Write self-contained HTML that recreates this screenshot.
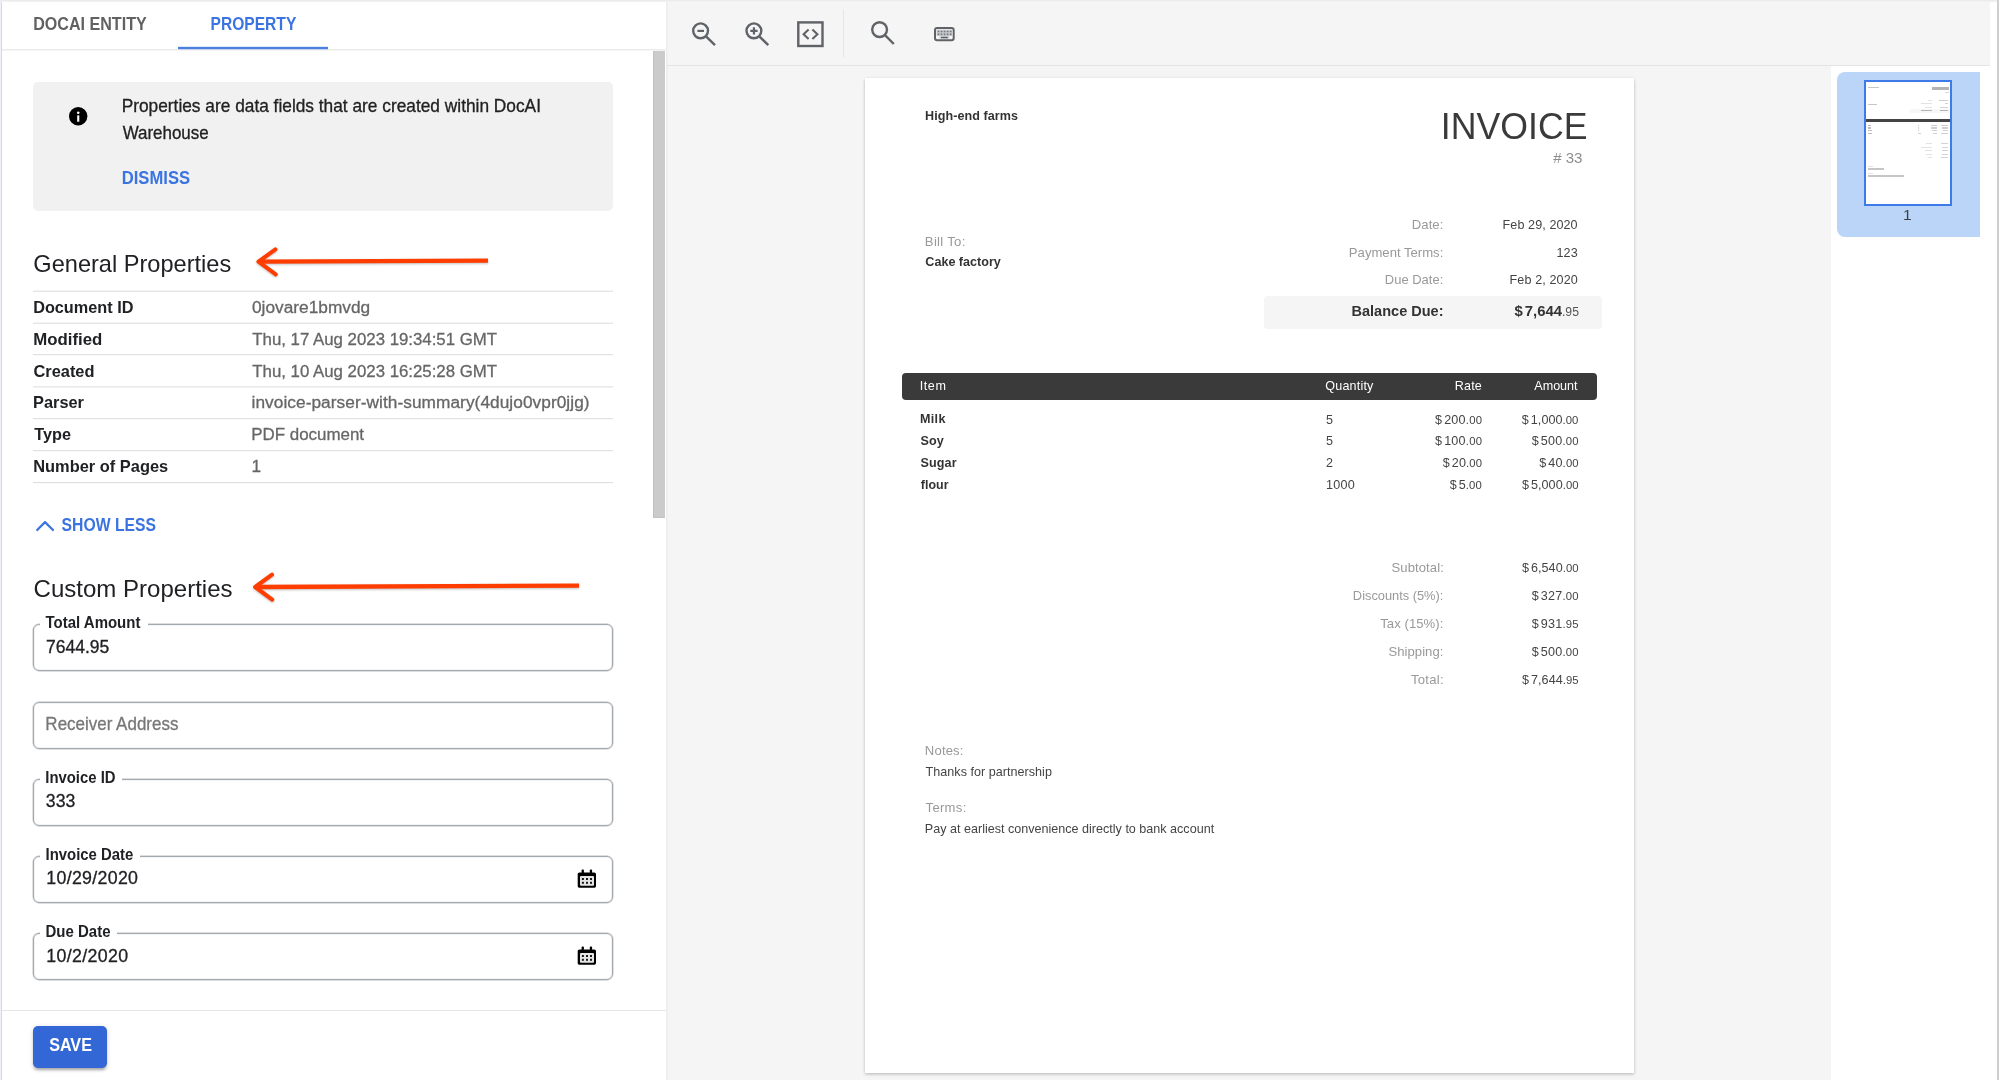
<!DOCTYPE html>
<html lang="en"><head><meta charset="utf-8"><title>Document AI Warehouse</title>
<style>
html,body{margin:0;padding:0}
body{width:1999px;height:1080px;position:relative;overflow:hidden;background:#fff;font-family:"Liberation Sans",sans-serif}
.a{position:absolute}
.t{position:absolute;white-space:nowrap;line-height:1;transform-origin:0 0}
.hl{position:absolute;left:33px;width:580px;height:1px}
.fld{position:absolute;left:33px;width:580px;height:47px;box-sizing:border-box;border:1px solid #a4a9ae;border-radius:6px;box-shadow:0 0 0 .45px rgba(164,169,174,.75),inset 0 0 0 .3px rgba(164,169,174,.5)}
.notch{position:absolute;top:-3px;left:5.6px;height:6px;background:#fff}
svg{position:absolute;overflow:visible}
.k{-webkit-text-stroke:.3px currentColor}

</style></head>
<body>
<!-- ===== frame ===== -->
<div class="a" style="left:0;top:0;width:1999px;height:1px;background:#ececec"></div><div class="a" style="left:0;top:1px;width:1999px;height:1px;background:#f1f1f1"></div>
<div class="a" style="left:0;top:2px;width:1px;height:1078px;background:#eef1f9"></div>
<div class="a" style="left:1px;top:2px;width:1px;height:1078px;background:#dadada"></div>
<!-- ===== left panel ===== -->
<div class="a" style="left:2px;top:49px;width:664px;height:1px;background:#ebebeb"></div>
<div class="a" style="left:2px;top:50px;width:664px;height:1px;background:#f4f4f4"></div>
<div class="a" style="left:178px;top:46px;width:150px;height:1px;background:#dfe8f9"></div>
<div class="a" style="left:178px;top:47px;width:150px;height:2px;background:#4c7fe0"></div>
<div class="a" style="left:178px;top:49px;width:150px;height:1px;background:#c4d3f0"></div>
<div class="a" style="left:653px;top:51px;width:12px;height:467px;background:#cbcbcb;box-sizing:border-box;border-left:1px solid #c0c0c0;border-bottom:1px solid #c3c3c3"></div>
<div class="a" style="left:33px;top:82px;width:579.6px;height:129.4px;background:#f1f1f1;border-radius:5px"></div>
<svg style="left:69px;top:107.4px" width="18.4" height="18.4" viewBox="0 0 20 20"><circle cx="10" cy="10" r="10" fill="#000"/><rect x="8.9" y="9.1" width="2.3" height="6.9" fill="#fff"/><circle cx="10.05" cy="6.3" r="1.4" fill="#fff"/></svg>
<!-- arrows -->
<svg style="left:0;top:0;filter:drop-shadow(0.5px 1px 1px rgba(0,0,0,.25))" width="666" height="1080" viewBox="0 0 666 1080" fill="none" stroke="#ff3d00" stroke-linejoin="round">
<path d="M488 260.6 L259 261.7" stroke-width="4.3" stroke-linecap="butt"/><path d="M275.4 249.4 L258.5 261.7 L275.7 274.3" stroke-width="4.1" stroke-linecap="round"/>
<path d="M579 585.6 L256 587" stroke-width="4.3" stroke-linecap="butt"/><path d="M272 574.6 L255.2 587 L272.2 599.6" stroke-width="4.1" stroke-linecap="round"/>
</svg>
<!-- table lines -->
<div class="hl" style="top:290px;background:#f4f4f4"></div>
<div class="hl" style="top:291px;background:#e6e6e6"></div>
<div class="hl" style="top:322px;background:#f4f4f4"></div>
<div class="hl" style="top:323px;background:#e6e6e6"></div>
<div class="hl" style="top:354px;background:#e3e3e3"></div>
<div class="hl" style="top:355px;background:#f8f8f8"></div>
<div class="hl" style="top:386px;background:#eaeaea"></div>
<div class="hl" style="top:387px;background:#f1f1f1"></div>
<div class="hl" style="top:418px;background:#e3e3e3"></div>
<div class="hl" style="top:419px;background:#f8f8f8"></div>
<div class="hl" style="top:450px;background:#e3e3e3"></div>
<div class="hl" style="top:451px;background:#f8f8f8"></div>
<div class="hl" style="top:482px;background:#dfdfdf"></div>
<div class="hl" style="top:483px;background:#fbfbfb"></div>
<!-- show less chevron -->
<svg style="left:35px;top:518px" width="20" height="14" viewBox="0 0 20 14" fill="none" stroke="#3b74e0" stroke-width="2.25" stroke-linecap="round" stroke-linejoin="round"><path d="M2.2 12 L10 4.1 L18 12"/></svg>
<!-- fields -->
<div class="fld" style="top:624px"><div class="notch" style="width:108px"></div></div>
<div class="fld" style="top:702px"></div>
<div class="fld" style="top:779px"><div class="notch" style="width:82.6px"></div></div>
<div class="fld" style="top:856px"><div class="notch" style="width:100.4px"></div></div>
<div class="fld" style="top:933px"><div class="notch" style="width:77.6px"></div></div>
<!-- calendar icons -->
<svg style="left:577px;top:869.0px" width="20" height="20" viewBox="0 0 20 20"><path d="M0.7 5.2c0-1 .8-1.8 1.8-1.8h14.7c1 0 1.8.8 1.8 1.8v11.8c0 1-.8 1.8-1.8 1.8H2.5c-1 0-1.8-.8-1.8-1.8z" fill="#000"/><rect x="4.6" y="0.5" width="2.3" height="4" rx="0.9" fill="#000"/><rect x="12.8" y="0.5" width="2.3" height="4" rx="0.9" fill="#000"/><rect x="3" y="6.9" width="14" height="9.9" rx="1" fill="#e4e4e4"/><g fill="#1a1a1a"><rect x="4.9" y="9" width="2" height="2"/><rect x="9" y="9" width="2" height="2"/><rect x="13" y="9" width="2" height="2"/><rect x="4.9" y="12.8" width="2" height="2"/><rect x="9" y="12.8" width="2" height="2"/><rect x="13" y="12.8" width="2" height="2"/></g></svg>
<svg style="left:577px;top:946.0px" width="20" height="20" viewBox="0 0 20 20"><path d="M0.7 5.2c0-1 .8-1.8 1.8-1.8h14.7c1 0 1.8.8 1.8 1.8v11.8c0 1-.8 1.8-1.8 1.8H2.5c-1 0-1.8-.8-1.8-1.8z" fill="#000"/><rect x="4.6" y="0.5" width="2.3" height="4" rx="0.9" fill="#000"/><rect x="12.8" y="0.5" width="2.3" height="4" rx="0.9" fill="#000"/><rect x="3" y="6.9" width="14" height="9.9" rx="1" fill="#e4e4e4"/><g fill="#1a1a1a"><rect x="4.9" y="9" width="2" height="2"/><rect x="9" y="9" width="2" height="2"/><rect x="13" y="9" width="2" height="2"/><rect x="4.9" y="12.8" width="2" height="2"/><rect x="9" y="12.8" width="2" height="2"/><rect x="13" y="12.8" width="2" height="2"/></g></svg>
<!-- bottom bar -->
<div class="a" style="left:2px;top:1009.6px;width:664px;height:1.2px;background:#e6e6e6"></div>
<div class="a" style="left:33.3px;top:1025.8px;width:73.6px;height:42.4px;background:#3367d6;border-radius:5px;box-shadow:0 3px 3px -1px rgba(0,0,0,.28),0 1px 5px 0 rgba(0,0,0,.16)"></div>
<!-- ===== center ===== -->
<div class="a" style="left:666px;top:2px;width:1324px;height:1078px;background:#f5f5f5"></div>
<div class="a" style="left:666px;top:2px;width:1px;height:1078px;background:#ededed"></div><div class="a" style="left:667px;top:2px;width:1px;height:1078px;background:#f1f1f1"></div>
<div class="a" style="left:667px;top:65px;width:1323px;height:1.2px;background:#e4e4e4"></div>
<div class="a" style="left:842.6px;top:9.4px;width:1.2px;height:48px;background:#e6e6e6"></div>
<!-- toolbar icons -->
<svg style="left:680px;top:10px" width="300" height="50" viewBox="680 10 300 50" fill="none" stroke="#5f6368" stroke-width="2.4">
<circle cx="700.6" cy="30.8" r="7.4"/><path d="M706 36.3 L715 45.2"/><path d="M697.4 30.9 H704" stroke-width="2.2"/>
<circle cx="753.9" cy="30.8" r="7.4"/><path d="M759.3 36.3 L768.3 45.2"/><path d="M750.3 30.9 H757.6 M753.95 27.2 V34.5" stroke-width="2.2"/>
<rect x="798.3" y="22.4" width="24.2" height="23.6"/><path d="M808.6 29.4 L803.6 34.2 L808.6 39 M812.4 29.4 L817.4 34.2 L812.4 39" stroke-width="2.1"/>
<circle cx="879.6" cy="29.6" r="7.4"/><path d="M885 35.1 L893.8 44"/>
<rect x="935" y="28" width="18.7" height="12.2" rx="2.2" stroke-width="2"/>
<rect x="936.6" y="29.6" width="15.5" height="6.2" fill="#c9cbcd" stroke="none"/>
<path d="M937.6 31.5h14 M937.6 34.3h14" stroke-width="1.7" stroke-dasharray="1.7 1.35" opacity=".8"/>
<rect x="939.4" y="36.2" width="10" height="2.6" fill="#cfd1d3" stroke="none"/><path d="M941 37.5h6.8" stroke-width="1.5"/>
</svg>
<!-- paper -->
<div class="a" style="left:864.6px;top:77.6px;width:769.4px;height:995.4px;background:#fff;box-shadow:0 1.5px 3px 0 rgba(0,0,0,.19),0 0 3px 0 rgba(0,0,0,.09)"></div>
<div class="a" style="left:1264px;top:296px;width:338px;height:33px;background:#f5f5f5;border-radius:4px"></div>
<div class="a" style="left:901.6px;top:373.2px;width:695.4px;height:26.6px;background:#3a3a3a;border-radius:4px"></div>
<!-- ===== thumbnails ===== -->
<div class="a" style="left:1830.6px;top:66.4px;width:159.4px;height:1014px;background:#fff"></div>
<div class="a" style="left:1990px;top:2px;width:7.4px;height:1078px;background:#fff"></div>
<div class="a" style="left:1997.4px;top:0;width:1.6px;height:1080px;background:#cfcfcf"></div>
<div class="a" style="left:1836.7px;top:71.6px;width:143.3px;height:165.2px;background:#bbd5f8;border-radius:8px 0 0 8px"></div>
<div class="a" style="left:1864px;top:80.4px;width:88px;height:125.8px;box-sizing:border-box;border:2px solid #3f7be8;background:#fff;overflow:hidden" id="thumb">
<div class="a" style="left:0;top:36.2px;width:84px;height:3.4px;background:#444"></div><div class="a" style="left:0;top:0;width:84px;height:122px;opacity:.55">
<div class="a" style="left:2.4px;top:4.6px;width:11px;height:1.4px;background:#999"></div>
<div class="a" style="left:66px;top:4.6px;width:17px;height:3.4px;background:#777"></div>
<div class="a" style="left:79px;top:9.6px;width:4px;height:1px;background:#bbb"></div>
<div class="a" style="left:2.4px;top:21.6px;width:9px;height:1.4px;background:#999"></div>
<div class="a" style="left:62px;top:17.4px;width:4px;height:1px;background:#ccc"></div><div class="a" style="left:73px;top:17.4px;width:9px;height:1px;background:#aaa"></div>
<div class="a" style="left:55px;top:20.8px;width:11px;height:1px;background:#ccc"></div><div class="a" style="left:79px;top:20.8px;width:3px;height:1px;background:#aaa"></div>
<div class="a" style="left:59px;top:24.2px;width:7px;height:1px;background:#ccc"></div><div class="a" style="left:74px;top:24.2px;width:8px;height:1px;background:#aaa"></div>
<div class="a" style="left:44px;top:26.4px;width:40px;height:4px;background:#f1f1f1"></div>
<div class="a" style="left:55px;top:27.6px;width:11px;height:1.4px;background:#777"></div><div class="a" style="left:74px;top:27.6px;width:8px;height:1.4px;background:#777"></div>
<div class="a" style="left:2.4px;top:42.4px;width:3px;height:1.2px;background:#888"></div><div class="a" style="left:52px;top:42.4px;width:1.4px;height:1.2px;background:#aaa"></div><div class="a" style="left:65px;top:42.4px;width:6px;height:1.2px;background:#aaa"></div><div class="a" style="left:75px;top:42.4px;width:7.4px;height:1.2px;background:#aaa"></div>
<div class="a" style="left:2.4px;top:45px;width:3px;height:1.2px;background:#888"></div><div class="a" style="left:52px;top:45px;width:1.4px;height:1.2px;background:#aaa"></div><div class="a" style="left:65px;top:45px;width:6px;height:1.2px;background:#aaa"></div><div class="a" style="left:76.4px;top:45px;width:6px;height:1.2px;background:#aaa"></div>
<div class="a" style="left:2.4px;top:47.6px;width:4px;height:1.2px;background:#888"></div><div class="a" style="left:52px;top:47.6px;width:1.4px;height:1.2px;background:#aaa"></div><div class="a" style="left:66px;top:47.6px;width:5px;height:1.2px;background:#aaa"></div><div class="a" style="left:77.4px;top:47.6px;width:5px;height:1.2px;background:#aaa"></div>
<div class="a" style="left:2.4px;top:50.4px;width:3.4px;height:1.2px;background:#888"></div><div class="a" style="left:52px;top:50.4px;width:3.4px;height:1.2px;background:#aaa"></div><div class="a" style="left:67px;top:50.4px;width:4px;height:1.2px;background:#aaa"></div><div class="a" style="left:75px;top:50.4px;width:7.4px;height:1.2px;background:#aaa"></div>
<div class="a" style="left:60px;top:61px;width:6px;height:1px;background:#ccc"></div><div class="a" style="left:75px;top:61px;width:7.4px;height:1px;background:#b0b0b0"></div>
<div class="a" style="left:55px;top:64.4px;width:11px;height:1px;background:#ccc"></div><div class="a" style="left:76.4px;top:64.4px;width:6px;height:1px;background:#b0b0b0"></div>
<div class="a" style="left:58.6px;top:67.8px;width:7.4px;height:1px;background:#ccc"></div><div class="a" style="left:76.4px;top:67.8px;width:6px;height:1px;background:#b0b0b0"></div>
<div class="a" style="left:60px;top:71.2px;width:6px;height:1px;background:#ccc"></div><div class="a" style="left:76.4px;top:71.2px;width:6px;height:1px;background:#b0b0b0"></div>
<div class="a" style="left:62px;top:74.6px;width:4px;height:1px;background:#ccc"></div><div class="a" style="left:75px;top:74.6px;width:7.4px;height:1px;background:#b0b0b0"></div>
<div class="a" style="left:2.4px;top:83.4px;width:4.4px;height:1px;background:#ccc"></div>
<div class="a" style="left:2.4px;top:86px;width:15.4px;height:1.2px;background:#999"></div>
<div class="a" style="left:2.4px;top:90.4px;width:4.8px;height:1px;background:#ccc"></div>
<div class="a" style="left:2.4px;top:93px;width:35.4px;height:1.2px;background:#999"></div>
</div></div>

<div id="txt" style="position:absolute;left:0;top:0;width:1999px;height:1080px;transform:translateZ(0);will-change:transform">
<span class="t" id="t0" style="left:33px;top:14px;font-size:17.50px;line-height:20px;color:#616161;font-weight:700;transform:translateX(0.23px) scaleX(0.9190);">DOCAI ENTITY</span>
<span class="t" id="t1" style="left:210px;top:14px;font-size:17.50px;line-height:20px;color:#3b74e0;font-weight:700;transform:translateX(0.59px) scaleX(0.8900);">PROPERTY</span>
<span class="t k" id="t2" style="left:121px;top:96px;font-size:17.75px;line-height:20px;color:#212121;transform:translateX(0.67px) scaleX(0.9747);">Properties are data fields that are created within DocAI</span>
<span class="t k" id="t3" style="left:122px;top:123px;font-size:17.75px;line-height:20px;color:#212121;transform:translateX(0.65px) scaleX(0.9546);">Warehouse</span>
<span class="t" id="t4" style="left:121px;top:168px;font-size:17.50px;line-height:20px;color:#3b74e0;font-weight:700;transform:translateX(0.74px) scaleX(0.9493);">DISMISS</span>
<span class="t" id="t5" style="left:33px;top:250px;font-size:24.00px;line-height:27px;color:#202124;transform:translateX(0.33px) scaleX(0.9825);">General Properties</span>
<span class="t" id="t6" style="left:33px;top:575px;font-size:24.00px;line-height:27px;color:#202124;transform:translateX(0.56px) scaleX(1.0005);letter-spacing:0.008px;">Custom Properties</span>
<span class="t" id="t7" style="left:33px;top:298px;font-size:17.00px;line-height:19px;color:#202124;font-weight:700;transform:translateX(0.16px) scaleX(0.9561);">Document ID</span>
<span class="t k" id="t8" style="left:251px;top:297px;font-size:17.25px;line-height:20px;color:#666;transform:translateX(0.90px) scaleX(1.0005);letter-spacing:0.026px;">0jovare1bmvdg</span>
<span class="t" id="t9" style="left:33px;top:330px;font-size:17.00px;line-height:19px;color:#202124;font-weight:700;transform:translateX(0.22px) scaleX(0.9882);">Modified</span>
<span class="t k" id="t10" style="left:252px;top:329px;font-size:17.25px;line-height:20px;color:#666;transform:translateX(0.30px) scaleX(0.9742);">Thu, 17 Aug 2023 19:34:51 GMT</span>
<span class="t" id="t11" style="left:33px;top:362px;font-size:17.00px;line-height:19px;color:#202124;font-weight:700;transform:translateX(0.51px) scaleX(0.9626);">Created</span>
<span class="t k" id="t12" style="left:252px;top:361px;font-size:17.25px;line-height:20px;color:#666;transform:translateX(0.30px) scaleX(0.9742);">Thu, 10 Aug 2023 16:25:28 GMT</span>
<span class="t" id="t13" style="left:33px;top:393px;font-size:17.00px;line-height:19px;color:#202124;font-weight:700;transform:translateX(0.09px) scaleX(0.9608);">Parser</span>
<span class="t k" id="t14" style="left:251px;top:392px;font-size:17.25px;line-height:20px;color:#666;transform:translateX(0.51px) scaleX(1.0005);letter-spacing:0.057px;">invoice-parser-with-summary(4dujo0vpr0jjg)</span>
<span class="t" id="t15" style="left:34px;top:425px;font-size:17.00px;line-height:19px;color:#202124;font-weight:700;transform:translateX(0.25px) scaleX(0.9575);">Type</span>
<span class="t k" id="t16" style="left:251px;top:424px;font-size:17.25px;line-height:20px;color:#666;transform:translateX(0.16px) scaleX(0.9813);">PDF document</span>
<span class="t" id="t17" style="left:33px;top:457px;font-size:17.00px;line-height:19px;color:#202124;font-weight:700;transform:translateX(0.23px) scaleX(0.9651);">Number of Pages</span>
<span class="t k" id="t18" style="left:251px;top:456px;font-size:17.25px;line-height:20px;color:#666;transform:translateX(0.42px) scaleX(1.0005);">1</span>
<span class="t" id="t19" style="left:61px;top:515px;font-size:17.50px;line-height:20px;color:#3b74e0;font-weight:700;transform:translateX(0.62px) scaleX(0.8986);">SHOW LESS</span>
<span class="t" id="t20" style="left:45px;top:613px;font-size:16.25px;line-height:18px;color:#202124;font-weight:700;transform:translateX(0.57px) scaleX(0.9215);">Total Amount</span>
<span class="t k" id="t21" style="left:45px;top:637px;font-size:17.75px;line-height:20px;color:#202124;transform:translateX(0.91px) scaleX(0.9876);">7644.95</span>
<span class="t k" id="t22" style="left:45px;top:714px;font-size:17.75px;line-height:20px;color:#777;transform:translateX(0.37px) scaleX(0.9562);">Receiver Address</span>
<span class="t" id="t23" style="left:45px;top:768px;font-size:16.25px;line-height:18px;color:#202124;font-weight:700;transform:translateX(0.32px) scaleX(0.9143);">Invoice ID</span>
<span class="t k" id="t24" style="left:45px;top:791px;font-size:17.75px;line-height:20px;color:#202124;transform:translateX(0.85px) scaleX(0.9947);">333</span>
<span class="t" id="t25" style="left:45px;top:845px;font-size:16.25px;line-height:18px;color:#202124;font-weight:700;transform:translateX(0.50px) scaleX(0.9171);">Invoice Date</span>
<span class="t k" id="t26" style="left:46px;top:868px;font-size:17.75px;line-height:20px;color:#202124;transform:translateX(0.31px) scaleX(1.0005);letter-spacing:0.305px;">10/29/2020</span>
<span class="t" id="t27" style="left:45px;top:922px;font-size:16.25px;line-height:18px;color:#202124;font-weight:700;transform:translateX(0.51px) scaleX(0.9227);">Due Date</span>
<span class="t k" id="t28" style="left:46px;top:946px;font-size:17.75px;line-height:20px;color:#202124;transform:translateX(0.31px) scaleX(1.0005);letter-spacing:0.353px;">10/2/2020</span>
<span class="t" id="t29" style="left:49px;top:1035px;font-size:17.50px;line-height:20px;color:#fff;font-weight:700;transform:translateX(0.13px) scaleX(0.9225);">SAVE</span>
<span class="t" id="t30" style="left:1902px;top:206px;font-size:15.50px;line-height:17px;color:#3c4043;transform:translateX(0.90px) scaleX(1.0005);">1</span>
<span class="t" id="t31" style="left:925px;top:109px;font-size:12.57px;line-height:14px;color:#333;font-weight:700;transform:translateX(0.10px) scaleX(1.0005);letter-spacing:0.053px;">High-end farms</span>
<span class="t" id="t32" style="left:1440px;top:106px;font-size:36.60px;line-height:41px;color:#3a3a3a;transform:translateX(0.76px) scaleX(0.9756);">INVOICE</span>
<span class="t" id="t33" style="left:1553px;top:149px;font-size:15.08px;line-height:17px;color:#8e8e8e;transform:translateX(0.25px) scaleX(1.0005);letter-spacing:-0.056px;"># 33</span>
<span class="t" id="t34" style="left:924px;top:234px;font-size:13.10px;line-height:15px;color:#999;transform:translateX(0.84px) scaleX(1.0005);letter-spacing:0.303px;">Bill To:</span>
<span class="t" id="t35" style="left:925px;top:255px;font-size:12.57px;line-height:14px;color:#333;font-weight:700;transform:translateX(0.33px) scaleX(1.0005);">Cake factory</span>
<span class="t" id="t36" style="left:1411px;top:217px;font-size:13.10px;line-height:15px;color:#999;transform:translateX(0.84px) scaleX(1.0005);letter-spacing:0.034px;">Date:</span>
<span class="t" id="t37" style="left:1502px;top:218px;font-size:12.57px;line-height:14px;color:#444;transform:translateX(0.57px) scaleX(1.0005);letter-spacing:0.088px;">Feb 29, 2020</span>
<span class="t" id="t38" style="left:1348px;top:245px;font-size:13.10px;line-height:15px;color:#999;transform:translateX(0.84px) scaleX(1.0005);letter-spacing:0.006px;">Payment Terms:</span>
<span class="t" id="t39" style="left:1556px;top:246px;font-size:12.57px;line-height:14px;color:#444;transform:translateX(0.46px) scaleX(1.0005);letter-spacing:0.131px;">123</span>
<span class="t" id="t40" style="left:1384px;top:272px;font-size:13.10px;line-height:15px;color:#999;transform:translateX(0.84px) scaleX(0.9906);">Due Date:</span>
<span class="t" id="t41" style="left:1509px;top:273px;font-size:12.57px;line-height:14px;color:#444;transform:translateX(0.57px) scaleX(1.0005);letter-spacing:0.106px;">Feb 2, 2020</span>
<span class="t" id="t42" style="left:1351px;top:303px;font-size:14.60px;line-height:16px;color:#333;font-weight:700;transform:translateX(0.53px) scaleX(0.9948);">Balance Due:</span>
<span class="t" id="t43" style="left:1514px;top:303px;font-size:14.60px;line-height:16px;color:#333;font-weight:700;transform:translateX(0.50px) scaleX(1.0201);">$<span style="margin-left:1.9px">7,644</span><span style="font-size:.82em;font-weight:400;color:#555;">.95</span></span>
<span class="t" id="t44" style="left:919px;top:379px;font-size:12.57px;line-height:14px;color:#fff;transform:translateX(0.77px) scaleX(1.0005);letter-spacing:0.550px;">Item</span>
<span class="t" id="t45" style="left:1325px;top:379px;font-size:12.57px;line-height:14px;color:#fff;transform:translateX(0.32px) scaleX(1.0005);letter-spacing:0.176px;">Quantity</span>
<span class="t" id="t46" style="left:1454px;top:379px;font-size:12.57px;line-height:14px;color:#fff;transform:translateX(0.74px) scaleX(1.0005);letter-spacing:0.186px;">Rate</span>
<span class="t" id="t47" style="left:1534px;top:379px;font-size:12.57px;line-height:14px;color:#fff;transform:translateX(0.29px) scaleX(1.0005);letter-spacing:-0.006px;">Amount</span>
<span class="t" id="t48" style="left:920px;top:412px;font-size:12.57px;line-height:14px;color:#333;font-weight:700;transform:translateX(0.10px) scaleX(1.0005);letter-spacing:0.279px;">Milk</span>
<span class="t" id="t49" style="left:1325px;top:413px;font-size:12.57px;line-height:14px;color:#444;transform:translateX(0.91px) scaleX(1.0005);">5</span>
<span class="t" id="t50" style="left:1435px;top:413px;font-size:12.57px;line-height:14px;color:#444;transform:translateX(0.03px) scaleX(1.0005);letter-spacing:0.231px;">$<span style="margin-left:1.9px">200</span><span style="font-size:.9em;">.00</span></span>
<span class="t" id="t51" style="left:1521px;top:413px;font-size:12.57px;line-height:14px;color:#444;transform:translateX(0.84px) scaleX(1.0005);letter-spacing:0.057px;">$<span style="margin-left:1.9px">1,000</span><span style="font-size:.9em;">.00</span></span>
<span class="t" id="t52" style="left:920px;top:434px;font-size:12.57px;line-height:14px;color:#333;font-weight:700;transform:translateX(0.40px) scaleX(1.0005);letter-spacing:0.159px;">Soy</span>
<span class="t" id="t53" style="left:1325px;top:434px;font-size:12.57px;line-height:14px;color:#444;transform:translateX(0.91px) scaleX(1.0005);">5</span>
<span class="t" id="t54" style="left:1435px;top:434px;font-size:12.57px;line-height:14px;color:#444;transform:translateX(0.03px) scaleX(1.0005);letter-spacing:0.231px;">$<span style="margin-left:1.9px">100</span><span style="font-size:.9em;">.00</span></span>
<span class="t" id="t55" style="left:1531px;top:434px;font-size:12.57px;line-height:14px;color:#444;transform:translateX(0.70px) scaleX(1.0005);letter-spacing:0.230px;">$<span style="margin-left:1.9px">500</span><span style="font-size:.9em;">.00</span></span>
<span class="t" id="t56" style="left:920px;top:456px;font-size:12.57px;line-height:14px;color:#333;font-weight:700;transform:translateX(0.40px) scaleX(1.0005);letter-spacing:0.140px;">Sugar</span>
<span class="t" id="t57" style="left:1325px;top:456px;font-size:12.57px;line-height:14px;color:#444;transform:translateX(0.94px) scaleX(1.0005);">2</span>
<span class="t" id="t58" style="left:1442px;top:456px;font-size:12.57px;line-height:14px;color:#444;transform:translateX(0.84px) scaleX(1.0005);letter-spacing:0.102px;">$<span style="margin-left:1.9px">20</span><span style="font-size:.9em;">.00</span></span>
<span class="t" id="t59" style="left:1539px;top:456px;font-size:12.57px;line-height:14px;color:#444;transform:translateX(0.31px) scaleX(1.0005);letter-spacing:0.145px;">$<span style="margin-left:1.9px">40</span><span style="font-size:.9em;">.00</span></span>
<span class="t" id="t60" style="left:920px;top:478px;font-size:12.57px;line-height:14px;color:#333;font-weight:700;transform:translateX(0.87px) scaleX(0.9898);">flour</span>
<span class="t" id="t61" style="left:1326px;top:478px;font-size:12.57px;line-height:14px;color:#444;transform:translateX(0.11px) scaleX(1.0005);letter-spacing:0.234px;">1000</span>
<span class="t" id="t62" style="left:1449px;top:478px;font-size:12.57px;line-height:14px;color:#444;transform:translateX(0.70px) scaleX(1.0005);letter-spacing:0.125px;">$<span style="margin-left:1.9px">5</span><span style="font-size:.9em;">.00</span></span>
<span class="t" id="t63" style="left:1522px;top:478px;font-size:12.57px;line-height:14px;color:#444;transform:translateX(0.03px) scaleX(1.0005);letter-spacing:0.058px;">$<span style="margin-left:1.9px">5,000</span><span style="font-size:.9em;">.00</span></span>
<span class="t" id="t64" style="left:1391px;top:560px;font-size:13.10px;line-height:15px;color:#999;transform:translateX(0.48px) scaleX(1.0005);letter-spacing:0.075px;">Subtotal:</span>
<span class="t" id="t65" style="left:1522px;top:561px;font-size:12.57px;line-height:14px;color:#444;transform:translateX(0.03px) scaleX(1.0005);letter-spacing:0.058px;">$<span style="margin-left:1.9px">6,540</span><span style="font-size:.9em;">.00</span></span>
<span class="t" id="t66" style="left:1352px;top:588px;font-size:13.10px;line-height:15px;color:#999;transform:translateX(0.87px) scaleX(0.9791);">Discounts (5%):</span>
<span class="t" id="t67" style="left:1531px;top:589px;font-size:12.57px;line-height:14px;color:#444;transform:translateX(0.70px) scaleX(1.0005);letter-spacing:0.230px;">$<span style="margin-left:1.9px">327</span><span style="font-size:.9em;">.00</span></span>
<span class="t" id="t68" style="left:1380px;top:616px;font-size:13.10px;line-height:15px;color:#999;transform:translateX(0.20px) scaleX(1.0005);letter-spacing:0.063px;">Tax (15%):</span>
<span class="t" id="t69" style="left:1531px;top:617px;font-size:12.57px;line-height:14px;color:#444;transform:translateX(0.70px) scaleX(1.0005);letter-spacing:0.227px;">$<span style="margin-left:1.9px">931</span><span style="font-size:.9em;">.95</span></span>
<span class="t" id="t70" style="left:1388px;top:644px;font-size:13.10px;line-height:15px;color:#999;transform:translateX(0.50px) scaleX(1.0005);letter-spacing:0.033px;">Shipping:</span>
<span class="t" id="t71" style="left:1531px;top:645px;font-size:12.57px;line-height:14px;color:#444;transform:translateX(0.70px) scaleX(1.0005);letter-spacing:0.230px;">$<span style="margin-left:1.9px">500</span><span style="font-size:.9em;">.00</span></span>
<span class="t" id="t72" style="left:1410px;top:672px;font-size:13.10px;line-height:15px;color:#999;transform:translateX(1.00px) scaleX(1.0005);letter-spacing:0.252px;">Total:</span>
<span class="t" id="t73" style="left:1522px;top:673px;font-size:12.57px;line-height:14px;color:#444;transform:translateX(0.03px) scaleX(1.0005);letter-spacing:0.067px;">$<span style="margin-left:1.9px">7,644</span><span style="font-size:.9em;">.95</span></span>
<span class="t" id="t74" style="left:924px;top:743px;font-size:13.10px;line-height:15px;color:#999;transform:translateX(0.84px) scaleX(1.0005);letter-spacing:0.152px;">Notes:</span>
<span class="t" id="t75" style="left:925px;top:765px;font-size:12.57px;line-height:14px;color:#444;transform:translateX(0.62px) scaleX(1.0005);letter-spacing:0.025px;">Thanks for partnership</span>
<span class="t" id="t76" style="left:925px;top:800px;font-size:13.10px;line-height:15px;color:#999;transform:translateX(0.61px) scaleX(1.0005);letter-spacing:0.272px;">Terms:</span>
<span class="t" id="t77" style="left:924px;top:822px;font-size:12.57px;line-height:14px;color:#444;transform:translateX(0.87px) scaleX(1.0005);">Pay at earliest convenience directly to bank account</span>
</div>
</body></html>
